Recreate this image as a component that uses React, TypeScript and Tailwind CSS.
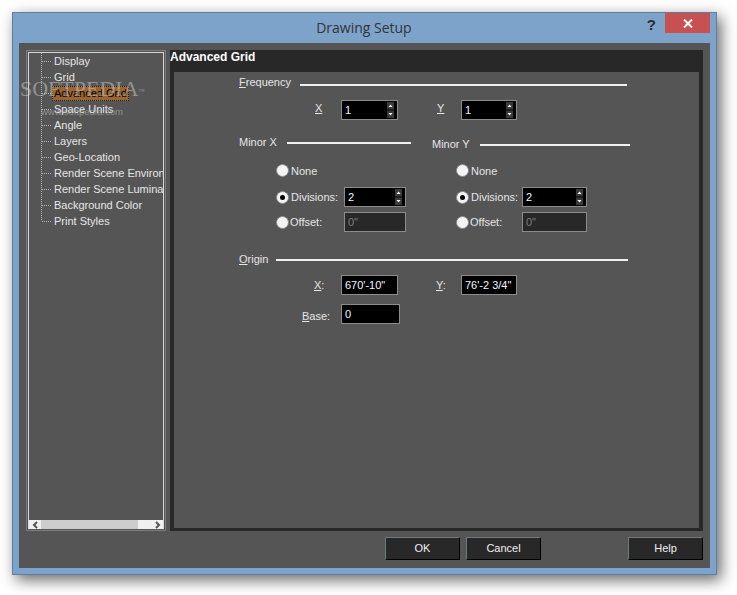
import type { ReactNode } from "react";

const treeItems = [
  "Display",
  "Grid",
  "Advanced Grid",
  "Space Units",
  "Angle",
  "Layers",
  "Geo-Location",
  "Render Scene Environment",
  "Render Scene Luminance",
  "Background Color",
  "Print Styles",
];

function TreeRow({ label, last }: { label: string; last: boolean }) {
  const selected = label === "Advanced Grid";
  return (
    <div className="flex h-4 items-center whitespace-nowrap">
      <svg width="11" height="16" className="shrink-0" stroke="#b5b5b5" strokeDasharray="1 1" fill="none">
        <path d={last ? "M.5 0V8" : "M.5 0V16"} />
        <path d="M1 8.5H11" />
      </svg>
      {selected ? (
        <span className="h-[15px] border border-dotted border-[#222] bg-[#9a6530] px-px leading-[13px] text-black">{label}</span>
      ) : (
        <span className="pl-[2px]">{label}</span>
      )}
    </div>
  );
}

function Spin({ value, width }: { value: string; width: string }) {
  return (
    <div className={`flex h-5 items-center justify-between border border-[#8c8c8c] bg-black pl-[3px] pr-[3px] text-[#f2f6ff] ${width}`}>
      <span>{value}</span>
      <svg width="7" height="16" className="shrink-0">
        <rect width="7" height="7.5" fill="#3a3a3a" />
        <rect y="8.5" width="7" height="7.5" fill="#3a3a3a" />
        <path d="M3.5 2.5 L5.5 5 H1.5 Z" fill="#fff" />
        <path d="M1.5 11 H5.5 L3.5 13.5 Z" fill="#fff" />
      </svg>
    </div>
  );
}

function TextBox({ value, width }: { value: string; width: string }) {
  return <div className={`flex h-5 items-center border border-[#8c8c8c] bg-black pl-[3px] text-[#f2f6ff] ${width}`}>{value}</div>;
}

function Radio({ checked }: { checked?: boolean }) {
  return (
    <span className="flex size-[13px] shrink-0 items-center justify-center rounded-full border border-[#8a8a8a] bg-[#f4f4f4]">
      {checked && <span className="size-[5px] rounded-full bg-black" />}
    </span>
  );
}

function Rule({ width }: { width: string }) {
  return <div className={`h-[2px] bg-[#f0f0f0] ${width}`} />;
}

function Label({ children, width }: { children: ReactNode; width: string }) {
  return <span className={`shrink-0 ${width}`}>{children}</span>;
}

function MinorColumn(props: { title: string; ruleWidth: string; spinWidth: string; indent: string; textWidth: string; noneGap: string }) {
  const { title, ruleWidth, spinWidth, indent, textWidth, noneGap } = props;
  return (
    <div className="flex flex-col">
      <div className="flex h-4 items-center">
        <Label width="w-[48px] pb-[2px]">{title}</Label>
        <Rule width={ruleWidth} />
      </div>
      <div className={`${indent} ${noneGap} flex h-4 items-center`}>
        <Radio />
        <span className="pl-[2px] pt-[2px]">None</span>
      </div>
      <div className={`${indent} mt-[9px] flex h-5 items-center`}>
        <Radio checked />
        <span className={`${textWidth} pl-[2px]`}>Divisions:</span>
        <Spin value="2" width={spinWidth} />
      </div>
      <div className={`${indent} mt-[5px] flex h-5 items-center`}>
        <Radio />
        <span className={`${textWidth} pl-[1px] pt-[1px]`}>Offset:</span>
        <div className={`flex h-5 items-center border border-[#8c8c8c] bg-[#282828] pl-[3px] text-[#7c7c7c] ${spinWidth}`}>0"</div>
      </div>
    </div>
  );
}

function FootButton({ children }: { children: ReactNode }) {
  return (
    <button className="flex h-[23px] w-[75px] items-center justify-center border border-b-black border-l-[#6f7a7a] border-r-black border-t-[#6f7a7a] bg-[#282828] text-[#f0f0f0]">
      {children}
    </button>
  );
}

export default function App() {
  return (
    <div className="h-[595px] w-[737px] overflow-hidden bg-white pl-3 pt-3 text-[11px] text-[#e6e6e6]" style={{ fontFamily: '"Liberation Sans", Arial, sans-serif' }}>
      <div className="relative flex h-[563px] w-[705px] flex-col border border-[#5d7f9f] bg-[#7da3cb] shadow-[4px_5px_14px_rgba(0,0,0,0.6)]">
        {/* Title bar */}
        <div className="flex h-[30px] shrink-0 items-start">
          <div className="flex h-[29px] flex-1 items-center justify-center pl-[68px] text-[14px] text-[#333]" style={{ fontFamily: '"Open Sans", sans-serif' }}>
            Drawing Setup
          </div>
          <span className="mr-[9px] mt-[3px] text-[15px] font-bold leading-[18px] text-[#2b2b2b]">?</span>
          <div className="mr-[6px] flex h-5 w-[45px] items-center justify-center bg-[#c75050]">
            <svg width="10" height="9" stroke="#fff" strokeWidth="2">
              <path d="M1 .5 L9 8.5 M9 .5 L1 8.5" />
            </svg>
          </div>
        </div>

        {/* Client area */}
        <div className="ml-[6px] mr-[6px] flex h-[525px] flex-col bg-[#555] pl-[7px] pr-[7px] pt-[7px]">
          <div className="flex h-[481px] gap-[4px]">
            {/* Tree */}
            <div className="flex w-[140px] flex-col border border-[#7d7d7d] p-px">
              <div className="flex min-h-0 flex-1 flex-col overflow-hidden border-x border-t border-[#d8d8d8]">
                <div className="min-h-0 flex-1 overflow-hidden pl-[12px]">
                  {treeItems.map((item, i) => (
                    <TreeRow key={item} label={item} last={i === treeItems.length - 1} />
                  ))}
                </div>
                <div className="flex h-[9px] shrink-0 items-center bg-[#f0f0f0]">
                  <svg width="12" height="9" className="shrink-0" fill="none" stroke="#555" strokeWidth="2">
                    <path d="M8 2 L5 5 L8 8" />
                  </svg>
                  <div className="h-full w-[97px] bg-[#cdcdcd]" />
                  <div className="flex-1" />
                  <svg width="12" height="9" className="shrink-0" fill="none" stroke="#555" strokeWidth="2">
                    <path d="M5 2 L8 5 L5 8" />
                  </svg>
                </div>
              </div>
            </div>

            {/* Settings panel */}
            <div className="flex w-[533px] flex-col bg-[#282828] pb-[3px] pl-[4px] pr-[4px]">
              <div className="-ml-[4px] h-[22px] text-[12px] font-bold leading-[14px] text-white">Advanced Grid</div>
              <div className="flex-1 bg-[#555] pl-[65px] pt-[3px]">
                {/* Frequency */}
                <div className="flex h-4 items-center">
                  <Label width="w-[61px] pb-[2px]"><u>F</u>requency</Label>
                  <div className="pt-[3px]">
                    <Rule width="w-[327px]" />
                  </div>
                </div>
                <div className="mt-[9px] flex h-5 items-center">
                  <div className="w-[76px]" />
                  <Label width="w-[26px] pb-[4px]"><u>X</u></Label>
                  <Spin value="1" width="w-[57px]" />
                  <div className="w-[39px]" />
                  <Label width="w-[24px] pb-[4px]"><u>Y</u></Label>
                  <Spin value="1" width="w-[56px]" />
                </div>

                {/* Minor X / Minor Y */}
                <div className="mt-[15px] flex">
                  <MinorColumn title="Minor X" ruleWidth="w-[124px]" spinWidth="w-[62px]" indent="ml-[37px]" textWidth="w-[55px]" noneGap="mt-[11px]" />
                  <div className="ml-[21px] mt-[2px]">
                    <MinorColumn title="Minor Y" ruleWidth="w-[150px]" spinWidth="w-[65px]" indent="ml-[24px]" textWidth="w-[53px]" noneGap="mt-[9px]" />
                  </div>
                </div>

                {/* Origin */}
                <div className="mt-[20px] flex h-4 items-center">
                  <Label width="w-[37px] pb-[2px]"><u>O</u>rigin</Label>
                  <Rule width="w-[352px]" />
                </div>
                <div className="mt-[7px] flex h-5 items-center">
                  <div className="w-[75px]" />
                  <Label width="w-[27px]"><u>X</u>:</Label>
                  <TextBox value={"670'-10\""} width="w-[57px]" />
                  <div className="w-[38px]" />
                  <Label width="w-[25px]"><u>Y</u>:</Label>
                  <TextBox value={"76'-2 3/4\""} width="w-[56px]" />
                </div>
                <div className="mt-[9px] flex h-5 items-center">
                  <div className="w-[63px]" />
                  <Label width="w-[39px] pt-[4px]"><u>B</u>ase:</Label>
                  <TextBox value="0" width="w-[59px]" />
                </div>
              </div>
            </div>
          </div>

          {/* Footer buttons */}
          <div className="mt-[6px] flex justify-end">
            <FootButton>OK</FootButton>
            <div className="w-[6px]" />
            <FootButton>Cancel</FootButton>
            <div className="w-[87px]" />
            <FootButton>Help</FootButton>
          </div>
        </div>

        {/* Softpedia watermark */}
        <div className="pointer-events-none absolute left-[7px] top-[66px] opacity-50">
          <div className="text-[22px] leading-[20px] text-[#d0d0d0]" style={{ fontFamily: '"Liberation Serif", serif' }}>
            SOFTPEDIA<sup className="text-[6px]">™</sup>
          </div>
          <div className="ml-[21px] mt-[6px] text-[9.5px] text-[#c9c9c9]">www.softpedia.com</div>
        </div>
      </div>
    </div>
  );
}
